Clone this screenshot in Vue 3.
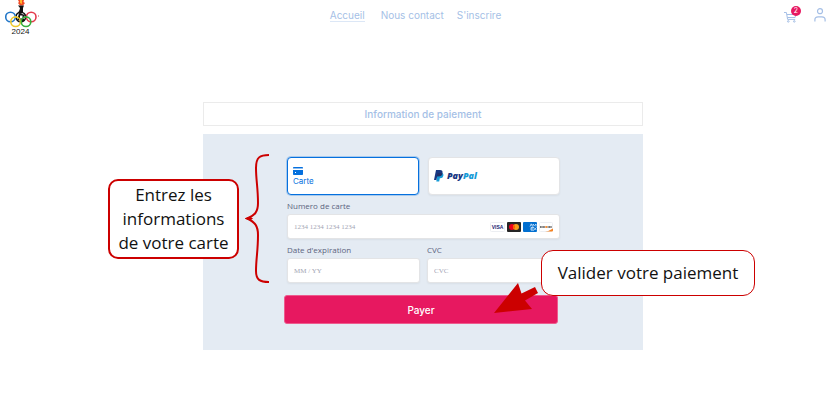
<script setup>
import { ref } from 'vue'

const links = [
  { label: 'Accueil', active: true },
  { label: 'Nous contact', active: false },
  { label: "S'inscrire", active: false },
]
const cartCount = ref(2)
const method = ref('carte')
const cardNumber = ref('')
const expiry = ref('')
const cvc = ref('')
</script>

<template>
  <div class="page">
    <header class="topbar">
      <a href="#" class="logo" aria-label="Jeux 2024">
        <svg width="36" height="36" viewBox="0 0 36 36" fill="none">
          <path d="M13 0L14 2L13 3L15 5.500H18L20 3L18.500 2L19 0Z" fill="#f04a24" />
          <path d="M15 0L15 3L17 4L17 0Z" fill="#ffb52a" />
          <path d="M13 5.500L19 5.500L18 8L18 12L16 14L13 13L14.500 10L15 8Z" fill="#111" />
          <path d="M14 13L20 15L18 18L20 20L17 22L14 20L12 21L13 17Z" fill="#111" />
          <path d="M15 15.500h2.500v3H15z" fill="#fff" />
          <g stroke-width="1.6">
            <circle cx="15.8" cy="17" r="4.8" stroke="#111" />
            <circle cx="5.5" cy="17" r="4.8" stroke="#2277c8" />
            <circle cx="26.2" cy="17" r="4.8" stroke="#e43b4d" />
            <circle cx="10.6" cy="21.7" r="4.8" stroke="#edc92c" />
            <circle cx="21" cy="21.7" r="4.8" stroke="#36ae3d" />
          </g>
          <path d="M33.5 15v2" stroke="#e8a0a8" />
          <text x="15.5" y="34" text-anchor="middle" class="year">2024</text>
        </svg>
      </a>
      <nav class="links">
        <a v-for="l in links" :key="l.label" href="#" :class="{ active: l.active }">{{ l.label }}</a>
      </nav>
      <div class="tools">
        <a href="#" class="cart" aria-label="Panier">
          <svg width="14" height="12" viewBox="0 0 14 12" fill="none" stroke="#a5bfe6">
            <path d="M0 1.5h2.4l1.2 6.9h7.6M2.9 3.5h9l-.8 3H3.4" />
            <circle cx="4.3" cy="10.4" r=".8" />
            <circle cx="10.3" cy="10.4" r=".8" />
          </svg>
          <span class="badge">{{ cartCount }}</span>
        </a>
        <a href="#" class="user" aria-label="Compte">
          <svg width="12" height="14" viewBox="0 0 12 14" fill="none" stroke="#a5bfe6" stroke-width="1.2">
            <circle cx="6" cy="3.2" r="2.5" />
            <path d="M.9 13.5v-1.7c0-2 1.4-3 3.2-3h3.8c1.8 0 3.2 1 3.2 3v1.7" />
          </svg>
        </a>
      </div>
    </header>

    <main class="payment">
      <h1 class="title">Information de paiement</h1>
      <form class="panel" @submit.prevent>
        <div class="methods">
          <button type="button" class="method" :class="{ selected: method === 'carte' }" @click="method = 'carte'">
            <svg width="10" height="8" viewBox="0 0 10 8">
              <path d="M.8 0h8.4q.8 0 .8.8V1H0V.8Q0 0 .8 0M0 3h10v4.2q0 .8-.8.8H.8Q0 8 0 7.2z" fill="#0570de" />
              <path d="M0 1h10v1H0z" fill="#8dbdf0" />
              <path d="M2 5h1v1H2z" fill="#fff" />
            </svg>
            <span>Carte</span>
          </button>
          <button type="button" class="method" :class="{ selected: method === 'paypal' }" aria-label="PayPal" @click="method = 'paypal'">
            <span class="paypal">
              <svg width="10" height="12" viewBox="0 0 10 12">
                <path d="M3.5 3h4.7q1.6.8 1.2 2.8Q8.8 8.5 5.8 8.3L5.2 11.5H2.3z" fill="#179bd7" />
                <path d="M2 0h4q3 .1 2.5 3Q8 6.4 4.6 6.3H3.2L2.4 10H0z" fill="#173782" />
                <path d="M3.4 3.2h5Q8 6.4 4.6 6.3H2.9z" fill="#222d65" />
              </svg>
              <span class="wordmark"><b>Pay</b><b class="pal">Pal</b></span>
            </span>
          </button>
        </div>

        <div class="field">
          <label for="number">Numero de carte</label>
          <div class="box">
            <input id="number" v-model="cardNumber" type="text" placeholder="1234 1234 1234 1234" />
            <span class="brands">
              <svg width="15" height="10" viewBox="0 0 15 10">
                <rect x=".5" y=".5" width="14" height="9" rx="1" fill="#fff" stroke="#eceef2" />
                <text x="7.5" y="7" text-anchor="middle" class="visa">VISA</text>
              </svg>
              <svg width="14" height="10" viewBox="0 0 14 10">
                <rect width="14" height="10" rx="1" fill="#252525" />
                <circle cx="5" cy="5" r="3" fill="#eb001b" />
                <circle cx="9" cy="5" r="3" fill="#f79e1b" />
                <path d="M7 2.8a3 3 0 0 1 0 4.4a3 3 0 0 1 0-4.4" fill="#ff5f00" />
              </svg>
              <svg width="14" height="10" viewBox="0 0 14 10">
                <rect width="14" height="10" rx="1" fill="#016fd0" />
                <path d="M7 4.5L8.2 1.8L9.4 4.5M10 4.5V2l1.5 1.5L13 2v2.5M11 8.2H8V5.5h3M8 6.9h2.5M11 5.5l2.5 2.7M13.5 5.5L11 8.2" fill="none" stroke="#d5e8fa" stroke-width=".8" />
              </svg>
              <svg width="14" height="10" viewBox="0 0 14 10">
                <rect x=".5" y=".5" width="13" height="9" rx="1" fill="#fff" stroke="#eceef2" />
                <path d="M14 6.4Q10 9 6 9.6h7q1 0 1-1z" fill="#f58220" />
                <path d="M1 5h5M8.500 5H13" stroke="#4a4a4a" stroke-width="1.5" stroke-dasharray="1.1 .3" />
                <circle cx="7.2" cy="5" r="1.1" fill="#f58220" />
              </svg>
            </span>
          </div>
        </div>

        <div class="pair">
          <div class="field">
            <label for="expiry">Date d'expiration</label>
            <div class="box">
              <input id="expiry" v-model="expiry" type="text" placeholder="MM / YY" />
            </div>
          </div>
          <div class="field">
            <label for="cvc">CVC</label>
            <div class="box">
              <input id="cvc" v-model="cvc" type="text" placeholder="CVC" />
            </div>
          </div>
        </div>

        <button type="submit" class="pay">Payer</button>
      </form>

      <p class="note note-card">Entrez les informations de votre carte</p>
      <svg class="brace" width="26" height="132" viewBox="0 0 26 132" fill="none" stroke="#c00" stroke-width="2">
        <path d="M24 2C15 2 11 4 11 15C11 27 13 35 13 50C13 59 10 62 2 65.500C10 69 13 73 13 82C13 98 11 106 11 118C11 127 15 129 24 129" />
        <path d="M0 65.500L5 63.500L8 65.500L5 67.500Z" fill="#c00" stroke="none" />
      </svg>
      <svg class="arrow" width="46" height="32" viewBox="0 0 46 32">
        <path d="M0 30L24 0L27.500 10.500L41 4L44 10L31 17.500L38 26Z" fill="#c00" />
      </svg>
      <p class="note note-pay">Valider votre paiement</p>
    </main>
  </div>
</template>

<style>
body {
  margin: 0;
  background: #fff;
}
</style>

<style scoped>
.page {
  font-family: Inter, 'Liberation Sans', sans-serif;
  font-size: 10px;
  color: #a5bfe6;
}
svg {
  display: block;
  flex: none;
}
a {
  color: inherit;
  text-decoration: none;
}
button {
  font: inherit;
  cursor: pointer;
}
.topbar {
  display: grid;
  grid-template-columns: 1fr auto 1fr;
  align-items: start;
  padding: 0 8px 0 5px;
}
.year {
  font: 8px 'Liberation Sans', sans-serif;
  fill: #111;
}
.links {
  display: flex;
  gap: 16px;
  padding-top: 9px;
  line-height: 12px;
}
.links a {
  border-bottom: 1px solid transparent;
}
.links a.active {
  border-color: #dce7f6;
}
.links a:last-child {
  margin-left: -3px;
}
.tools {
  display: flex;
  justify-content: flex-end;
  gap: 16px;
  padding-top: 8px;
}
.cart {
  position: relative;
  padding-top: 3px;
}
.badge {
  position: absolute;
  top: -2px;
  right: -3px;
  width: 10px;
  height: 10px;
  border-radius: 50%;
  background: #e71860;
  color: #fff;
  font-size: 7px;
  line-height: 10px;
  text-align: center;
}
.payment {
  position: relative;
  box-sizing: border-box;
  width: 440px;
  max-width: 100%;
  margin: 66px auto 0;
  left: 6px;
}
.title {
  margin: 0 0 8px;
  border: 1px solid #ebebeb;
  font-size: 10px;
  font-weight: 500;
  line-height: 22px;
  text-align: center;
}
.panel {
  display: flex;
  flex-direction: column;
  padding: 23px 83px 26px 84px;
  background: #e4ebf3;
}
.methods {
  display: grid;
  grid-template-columns: 1fr 1fr;
  gap: 9px;
  margin-bottom: 5px;
}
.method {
  display: flex;
  flex-direction: column;
  justify-content: center;
  align-items: flex-start;
  gap: 1px;
  height: 38px;
  padding: 0 5px;
  border: 1px solid #e3e4e6;
  border-radius: 4px;
  background: #fff;
  box-shadow: 0 1px 2px #0000000d;
  color: #0570de;
  font: 8px/10px Inter, sans-serif;
}
.method.selected {
  border: 1px solid #0570de;
  box-shadow: 0 0 0 1px #0570de44;
}
.paypal {
  display: flex;
  align-items: center;
  gap: 3px;
}
.wordmark {
  color: #173782;
  font: italic 700 9px/12px 'Open Sans', sans-serif;
}
.pal {
  color: #179bd7;
}
.field {
  display: flex;
  flex-direction: column;
  min-width: 0;
}
.field label {
  margin-bottom: 2px;
  color: #5c6480;
  font: 8px/12px 'Open Sans', sans-serif;
}
.box {
  display: flex;
  align-items: center;
  box-sizing: border-box;
  height: 25px;
  padding: 0 6px;
  border: 1px solid #e3e4e6;
  border-radius: 3px;
  background: #fff;
  box-shadow: 0 1px 2px #0000000d;
}
.box input {
  flex: 1;
  min-width: 0;
  padding: 0;
  border: 0;
  outline: 0;
  background: none;
  color: #30313d;
  font: 7px/10px 'Liberation Serif', serif;
}
.box input::placeholder {
  color: #a3a5b4;
  opacity: 1;
}
.brands {
  display: flex;
  gap: 2px;
}
.visa {
  font: 700 5px 'Liberation Sans', sans-serif;
  fill: #1a2170;
}
.pair {
  display: grid;
  grid-template-columns: 1fr 1fr;
  gap: 7px;
  margin: 5px 0 12px;
}
.pay {
  height: 29px;
  margin: 0 2px 0 -3px;
  padding: 0;
  border: 1px solid #ed5b8e;
  border-radius: 3px;
  background: #e71860;
  color: #fff;
  font-weight: 500;
}
.note {
  position: absolute;
  box-sizing: border-box;
  margin: 0;
  border: 2px solid #c00;
  background: #fff;
  color: #111;
  font: 17px/24px 'Open Sans', sans-serif;
  text-align: center;
}
.note-card {
  top: 77px;
  left: -95px;
  width: 131px;
  padding: 2px 4px;
  border-radius: 10px;
}
.brace {
  position: absolute;
  top: 51px;
  left: 42px;
}
.arrow {
  position: absolute;
  top: 181px;
  left: 291px;
}
.note-pay {
  top: 148px;
  left: 338px;
  width: 214px;
  padding: 10px 0;
  border-width: 1px;
  border-radius: 12px;
  white-space: nowrap;
}
</style>
